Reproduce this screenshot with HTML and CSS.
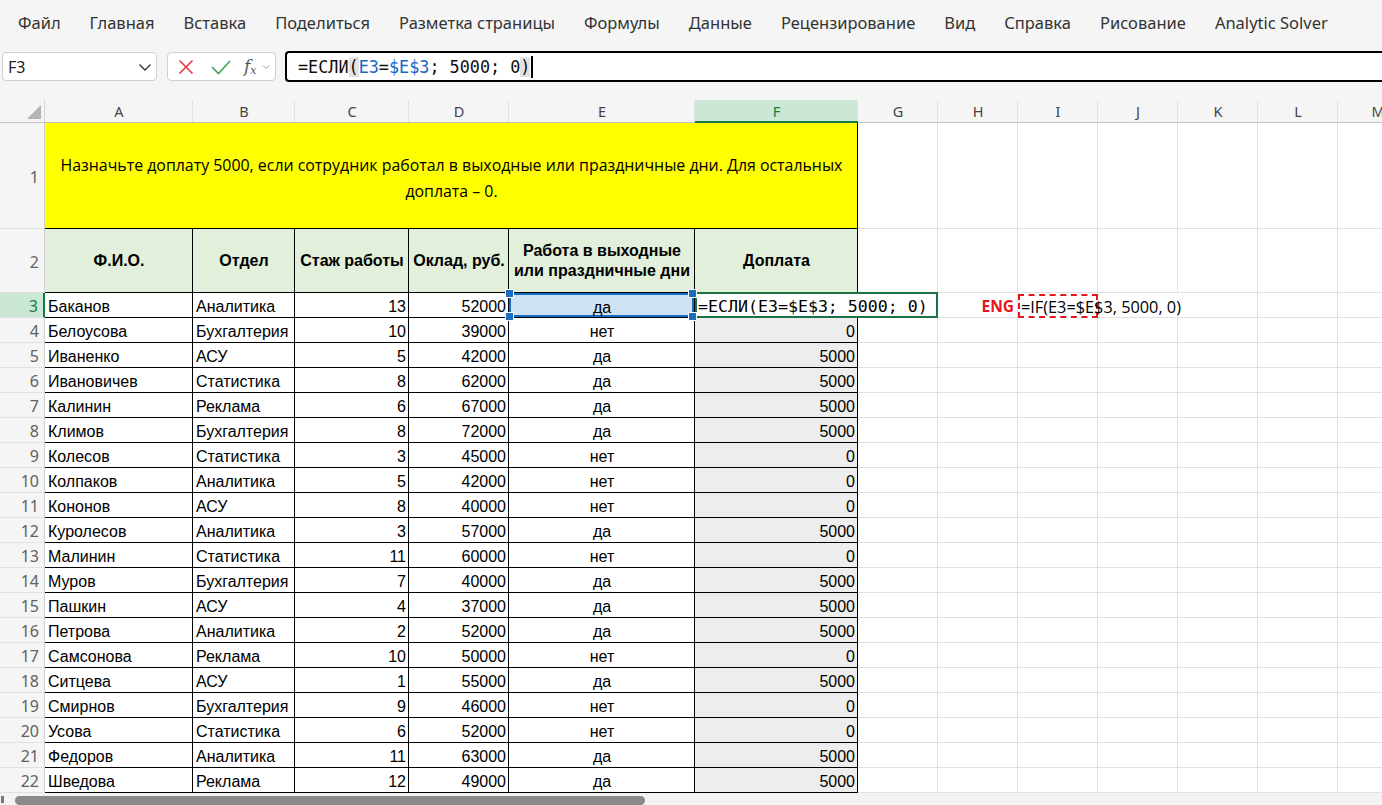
FILE: index.html
```html
<!DOCTYPE html>
<html lang="ru">
<head>
<meta charset="utf-8">
<title>Excel</title>
<link rel="stylesheet" href="styles.css">
</head>
<body>
<div class="app">
  <nav class="menu">
    <span>Файл</span><span>Главная</span><span>Вставка</span><span>Поделиться</span><span>Разметка страницы</span><span>Формулы</span><span>Данные</span><span>Рецензирование</span><span>Вид</span><span>Справка</span><span>Рисование</span><span>Analytic Solver</span>
  </nav>
  <div class="fbar">
    <div class="namebox">
      <span>F3</span>
      <svg class="chev" width="14" height="10" viewBox="0 0 14 10"><polyline points="1.5,2.5 7,8 12.5,2.5" fill="none" stroke="#333" stroke-width="1.4"/></svg>
    </div>
    <div class="fxgroup">
      <svg width="16" height="16" viewBox="0 0 16 16"><path d="M1.5 1.5 L14.5 14.5 M14.5 1.5 L1.5 14.5" stroke="#e2393e" stroke-width="1.6" fill="none"/></svg>
      <svg width="20" height="16" viewBox="0 0 20 16"><polyline points="1,8 7.5,14.5 19,2" stroke="#3aa655" stroke-width="1.6" fill="none"/></svg>
      <span class="fx"><i>f</i><sub>x</sub></span>
      <svg class="smallchev" width="8" height="6" viewBox="0 0 8 6"><polyline points="1,1.5 4,4.5 7,1.5" fill="none" stroke="#999" stroke-width="1"/></svg>
    </div>
    <div class="finput"><span>=ЕСЛИ</span><span class="hl">(</span><span class="ref">E3</span>=<span class="ref">$E$3</span>; 5000; 0<span class="hl">)</span><span class="caret"></span></div>
  </div>
  <div class="sheet">
    <div class="ch corner"><span class="tri"></span></div>
    <div class="ch">A</div><div class="ch">B</div><div class="ch">C</div><div class="ch">D</div><div class="ch">E</div><div class="ch sel">F</div><div class="ch">G</div><div class="ch">H</div><div class="ch">I</div><div class="ch">J</div><div class="ch">K</div><div class="ch">L</div><div class="ch">M</div>

    <div class="rh">1</div>
    <div class="c title">Назначьте доплату 5000, если сотрудник работал в выходные или праздничные дни. Для остальных<br>доплата – 0.</div>
    <div class="c"></div><div class="c"></div><div class="c"></div><div class="c"></div><div class="c"></div><div class="c"></div><div class="c"></div>

    <div class="rh">2</div>
    <div class="c t head">Ф.И.О.</div><div class="c t head">Отдел</div><div class="c t head">Стаж работы</div><div class="c t head">Оклад, руб.</div><div class="c t head">Работа в выходные<br>или праздничные дни</div><div class="c t head">Доплата</div>
    <div class="c"></div><div class="c"></div><div class="c"></div><div class="c"></div><div class="c"></div><div class="c"></div><div class="c"></div>

    <div class="rh rsel">3</div>
    <div class="c t">Баканов</div><div class="c t">Аналитика</div><div class="c t n">13</div><div class="c t n">52000</div>
    <div class="c t m esel">да<i class="h tl"></i><i class="h bl"></i><i class="h tr"></i><i class="h br"></i></div>
    <div class="c editor">=ЕСЛИ(E3=$E$3; 5000; 0)</div>
    <div class="c eng">ENG</div>
    <div class="c dash">=IF(E3=$E$3, 5000, 0)</div>
    <div class="c nor"></div><div class="c"></div><div class="c"></div><div class="c"></div>

    <div class="rh">4</div><div class="c t">Белоусова</div><div class="c t">Бухгалтерия</div><div class="c t n">10</div><div class="c t n">39000</div><div class="c t m">нет</div><div class="c t n g">0</div><div class="c"></div><div class="c"></div><div class="c"></div><div class="c"></div><div class="c"></div><div class="c"></div><div class="c"></div>
    <div class="rh">5</div><div class="c t">Иваненко</div><div class="c t">АСУ</div><div class="c t n">5</div><div class="c t n">42000</div><div class="c t m">да</div><div class="c t n g">5000</div><div class="c"></div><div class="c"></div><div class="c"></div><div class="c"></div><div class="c"></div><div class="c"></div><div class="c"></div>
    <div class="rh">6</div><div class="c t">Ивановичев</div><div class="c t">Статистика</div><div class="c t n">8</div><div class="c t n">62000</div><div class="c t m">да</div><div class="c t n g">5000</div><div class="c"></div><div class="c"></div><div class="c"></div><div class="c"></div><div class="c"></div><div class="c"></div><div class="c"></div>
    <div class="rh">7</div><div class="c t">Калинин</div><div class="c t">Реклама</div><div class="c t n">6</div><div class="c t n">67000</div><div class="c t m">да</div><div class="c t n g">5000</div><div class="c"></div><div class="c"></div><div class="c"></div><div class="c"></div><div class="c"></div><div class="c"></div><div class="c"></div>
    <div class="rh">8</div><div class="c t">Климов</div><div class="c t">Бухгалтерия</div><div class="c t n">8</div><div class="c t n">72000</div><div class="c t m">да</div><div class="c t n g">5000</div><div class="c"></div><div class="c"></div><div class="c"></div><div class="c"></div><div class="c"></div><div class="c"></div><div class="c"></div>
    <div class="rh">9</div><div class="c t">Колесов</div><div class="c t">Статистика</div><div class="c t n">3</div><div class="c t n">45000</div><div class="c t m">нет</div><div class="c t n g">0</div><div class="c"></div><div class="c"></div><div class="c"></div><div class="c"></div><div class="c"></div><div class="c"></div><div class="c"></div>
    <div class="rh">10</div><div class="c t">Колпаков</div><div class="c t">Аналитика</div><div class="c t n">5</div><div class="c t n">42000</div><div class="c t m">нет</div><div class="c t n g">0</div><div class="c"></div><div class="c"></div><div class="c"></div><div class="c"></div><div class="c"></div><div class="c"></div><div class="c"></div>
    <div class="rh">11</div><div class="c t">Кононов</div><div class="c t">АСУ</div><div class="c t n">8</div><div class="c t n">40000</div><div class="c t m">нет</div><div class="c t n g">0</div><div class="c"></div><div class="c"></div><div class="c"></div><div class="c"></div><div class="c"></div><div class="c"></div><div class="c"></div>
    <div class="rh">12</div><div class="c t">Куролесов</div><div class="c t">Аналитика</div><div class="c t n">3</div><div class="c t n">57000</div><div class="c t m">да</div><div class="c t n g">5000</div><div class="c"></div><div class="c"></div><div class="c"></div><div class="c"></div><div class="c"></div><div class="c"></div><div class="c"></div>
    <div class="rh">13</div><div class="c t">Малинин</div><div class="c t">Статистика</div><div class="c t n">11</div><div class="c t n">60000</div><div class="c t m">нет</div><div class="c t n g">0</div><div class="c"></div><div class="c"></div><div class="c"></div><div class="c"></div><div class="c"></div><div class="c"></div><div class="c"></div>
    <div class="rh">14</div><div class="c t">Муров</div><div class="c t">Бухгалтерия</div><div class="c t n">7</div><div class="c t n">40000</div><div class="c t m">да</div><div class="c t n g">5000</div><div class="c"></div><div class="c"></div><div class="c"></div><div class="c"></div><div class="c"></div><div class="c"></div><div class="c"></div>
    <div class="rh">15</div><div class="c t">Пашкин</div><div class="c t">АСУ</div><div class="c t n">4</div><div class="c t n">37000</div><div class="c t m">да</div><div class="c t n g">5000</div><div class="c"></div><div class="c"></div><div class="c"></div><div class="c"></div><div class="c"></div><div class="c"></div><div class="c"></div>
    <div class="rh">16</div><div class="c t">Петрова</div><div class="c t">Аналитика</div><div class="c t n">2</div><div class="c t n">52000</div><div class="c t m">да</div><div class="c t n g">5000</div><div class="c"></div><div class="c"></div><div class="c"></div><div class="c"></div><div class="c"></div><div class="c"></div><div class="c"></div>
    <div class="rh">17</div><div class="c t">Самсонова</div><div class="c t">Реклама</div><div class="c t n">10</div><div class="c t n">50000</div><div class="c t m">нет</div><div class="c t n g">0</div><div class="c"></div><div class="c"></div><div class="c"></div><div class="c"></div><div class="c"></div><div class="c"></div><div class="c"></div>
    <div class="rh">18</div><div class="c t">Ситцева</div><div class="c t">АСУ</div><div class="c t n">1</div><div class="c t n">55000</div><div class="c t m">да</div><div class="c t n g">5000</div><div class="c"></div><div class="c"></div><div class="c"></div><div class="c"></div><div class="c"></div><div class="c"></div><div class="c"></div>
    <div class="rh">19</div><div class="c t">Смирнов</div><div class="c t">Бухгалтерия</div><div class="c t n">9</div><div class="c t n">46000</div><div class="c t m">нет</div><div class="c t n g">0</div><div class="c"></div><div class="c"></div><div class="c"></div><div class="c"></div><div class="c"></div><div class="c"></div><div class="c"></div>
    <div class="rh">20</div><div class="c t">Усова</div><div class="c t">Статистика</div><div class="c t n">6</div><div class="c t n">52000</div><div class="c t m">нет</div><div class="c t n g">0</div><div class="c"></div><div class="c"></div><div class="c"></div><div class="c"></div><div class="c"></div><div class="c"></div><div class="c"></div>
    <div class="rh">21</div><div class="c t">Федоров</div><div class="c t">Аналитика</div><div class="c t n">11</div><div class="c t n">63000</div><div class="c t m">да</div><div class="c t n g">5000</div><div class="c"></div><div class="c"></div><div class="c"></div><div class="c"></div><div class="c"></div><div class="c"></div><div class="c"></div>
    <div class="rh">22</div><div class="c t">Шведова</div><div class="c t">Реклама</div><div class="c t n">12</div><div class="c t n">49000</div><div class="c t m">да</div><div class="c t n g">5000</div><div class="c"></div><div class="c"></div><div class="c"></div><div class="c"></div><div class="c"></div><div class="c"></div><div class="c"></div>
  </div>
  <div class="hscroll"><span class="arrow"></span><span class="thumb"></span></div>
</div>
</body>
</html>
```

FILE: styles.css
```css
html, body {
  margin: 0;
  padding: 0;
}
body {
  width: 1382px;
  height: 805px;
  overflow: hidden;
  background: #f5f5f5;
  font-family: "Noto Sans", "Open Sans", sans-serif;
}
.app {
  width: 1382px;
  height: 805px;
  overflow: hidden;
  display: flex;
  flex-direction: column;
}
.menu {
  height: 44px;
  flex: none;
  display: flex;
  align-items: center;
  gap: 29px;
  padding-left: 18px;
  font-size: 16.5px;
  color: #333;
  white-space: nowrap;
}
.fbar {
  height: 56px;
  flex: none;
  display: flex;
  align-items: flex-start;
  padding: 7px 0 0 2px;
  box-sizing: border-box;
}
.namebox {
  width: 155px;
  height: 29px;
  margin-top: 1px;
  box-sizing: border-box;
  border: 1px solid #d0d0d0;
  border-radius: 4px;
  background: #fff;
  display: flex;
  align-items: center;
  justify-content: space-between;
  padding: 0 4px 0 5px;
  font-size: 16px;
  color: #222;
}
.fxgroup {
  width: 109px;
  height: 29px;
  margin: 1px 0 0 10px;
  box-sizing: border-box;
  border: 1px solid #d0d0d0;
  border-radius: 4px;
  background: #fff;
  display: flex;
  align-items: center;
  gap: 0;
  padding-left: 10px;
}
.fxgroup svg:nth-child(2) {
  margin-left: 17px;
}
.fx {
  margin-left: 13px;
  font-family: "DejaVu Serif", serif;
  font-size: 17px;
  color: #555;
  line-height: 1;
}
.fx i { font-style: italic; }
.fx sub {
  font-size: 11px;
  font-style: italic;
  vertical-align: -2px;
}
.smallchev { margin-left: 5px; }
.finput {
  flex: 1;
  height: 31px;
  margin-left: 9px;
  box-sizing: border-box;
  border: 2px solid #000;
  border-right: none;
  border-radius: 4px 0 0 4px;
  background: #fff;
  display: flex;
  align-items: center;
  padding-left: 11px;
  font-family: "DejaVu Sans Mono", monospace;
  font-size: 16.8px;
  color: #111;
  white-space: pre;
}
.finput .ref { color: #1668c4; }
.finput .hl { background: #e3e3e3; }
.finput .caret {
  display: inline-block;
  width: 2px;
  height: 22px;
  background: #000;
  margin-left: 1px;
}
.sheet {
  flex: none;
  height: 693px;
  display: grid;
  grid-template-columns: 45px 148px 102px 114px 100px 186px 163px 80px 80px 80px 80px 80px 80px 80px;
  grid-template-rows: 23px 106px 64px repeat(20, 25px);
  background: #fff;
  overflow: hidden;
}
.ch {
  background: #f5f5f5;
  border-bottom: 1px solid #c4c4c4;
  box-shadow: inset -1px 0 0 #e1e1e1;
  display: flex;
  align-items: center;
  justify-content: center;
  font-size: 14.5px;
  color: #444;
  box-sizing: border-box;
}
.ch.corner {
  position: relative;
  box-shadow: inset -1px 0 0 #d6d6d6;
}
.tri {
  position: absolute;
  right: 4px;
  bottom: 3px;
  width: 0;
  height: 0;
  border-left: 14px solid transparent;
  border-bottom: 14px solid #b4b4b4;
}
.ch.sel {
  background: #cae8d5;
  color: #107c41;
  border-bottom: 2px solid #107c41;
}
.rh {
  background: #f5f5f5;
  border-right: 1px solid #d0d0d0;
  border-bottom: 1px solid #e1e1e1;
  box-sizing: border-box;
  display: flex;
  align-items: center;
  justify-content: flex-end;
  padding: 2px 5px 0 0;
  font-size: 16px;
  color: #616161;
}
.rh.rsel {
  background: #cae8d5;
  color: #107c41;
  border-right: 2px solid #107c41;
}
.c {
  box-sizing: border-box;
  border-right: 1px solid #e1e1e1;
  border-bottom: 1px solid #e1e1e1;
  display: flex;
  align-items: center;
  padding: 4px 2px 0 3px;
  font-family: "Liberation Sans", Arial, sans-serif;
  font-size: 16px;
  color: #000;
  white-space: nowrap;
  overflow: hidden;
  min-width: 0;
}
.c.t {
  border-right-color: #000;
  border-bottom-color: #000;
}
.c.n { justify-content: flex-end; }
.c.m { justify-content: center; }
.c.g { background: #ededed; }
.c.title {
  grid-column: span 6;
  background: #ffff00;
  border-right: 1px solid #000;
  border-bottom: 1px solid #000;
  justify-content: center;
  text-align: center;
  font-family: "Open Sans", "Noto Sans", sans-serif;
  font-size: 15.9px;
  line-height: 26px;
  padding-top: 4px;
}
.c.head {
  background: #e2efda;
  font-weight: bold;
  justify-content: center;
  text-align: center;
  line-height: 20px;
  padding-top: 1px;
}
.c.esel {
  position: relative;
  overflow: visible;
  background: #cfe2f3;
  box-shadow: inset 0 0 0 2px #1a6dc1;
  padding-top: 5px;
}
.h {
  position: absolute;
  width: 7px;
  height: 7px;
  background: #1a6dc1;
  border: 1px solid #fff;
  box-sizing: content-box;
}
.h.tl { left: -4px; top: -4px; }
.h.bl { left: -4px; bottom: -4px; }
.h.tr { right: -3px; top: -4px; }
.h.br { right: -3px; bottom: -4px; }
.c.editor {
  grid-column: span 2;
  background: #fff;
  border: 2px solid #1e7145;
  margin-top: -1px;
  padding: 3px 0 0 1px;
  font-family: "DejaVu Sans Mono", monospace;
  font-size: 16.6px;
  overflow: visible;
}
.c.eng {
  justify-content: flex-end;
  padding-right: 3px;
  padding-top: 2px;
  font-family: "Open Sans", "Noto Sans", sans-serif;
  font-weight: bold;
  font-size: 15.5px;
  color: #e8141b;
}
.c.dash {
  overflow: visible;
  border: 2px dashed #e8141b;
  margin-top: 1px;
  padding: 1px 0 0 1px;
  font-family: "Open Sans", "Noto Sans", sans-serif;
  font-size: 16.3px;
  position: relative;
  z-index: 1;
}
.c.nor { border-right-color: transparent; }
.hscroll {
  flex: none;
  height: 12px;
  background: #f3f3f3;
  display: flex;
  align-items: center;
  position: relative;
}
.arrow {
  width: 3px;
  height: 7px;
  margin-left: 1px;
  background: #777;
}
.thumb {
  width: 630px;
  height: 9px;
  margin-left: 11px;
  margin-top: 2px;
  border-radius: 5px;
  background: #8a8a8a;
}
```
